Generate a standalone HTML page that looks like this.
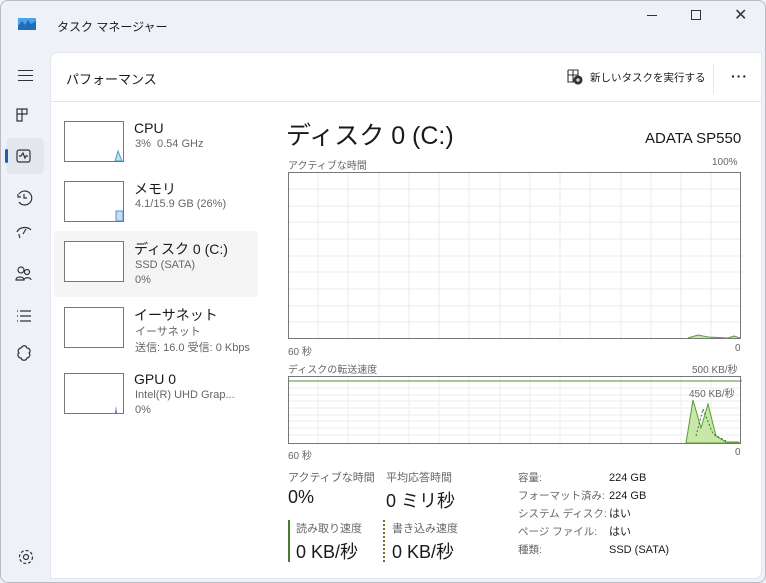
<!DOCTYPE html>
<html><head><meta charset="utf-8"><style>
*{margin:0;padding:0;box-sizing:border-box}
body{width:766px;height:583px;background:#eef2f8;font-family:"Liberation Sans","Noto Sans CJK JP",sans-serif;color:#1a1a1a;position:relative;overflow:hidden}
.a{position:absolute;white-space:nowrap}
.card{position:absolute;left:50px;top:52px;width:712px;height:527px;background:#fff;border-radius:8px 0 8px 0;border:1px solid #e3e6ea}
.s{color:#666;font-size:11px}
.thumb{position:absolute;left:64px;width:60px;height:41px;border:1px solid #777;background:#fff}
</style></head><body>
<div class="a" style="left:0;top:0;width:766px;height:583px;border:1px solid #b8bcc2;border-radius:8px"></div>
<svg class="a" style="left:18px;top:18px" width="18" height="12"><rect width="18" height="12" fill="#4aa3e8"/><path d="M0 8 L4 3 L7 7 L10 2 L13 6 L18 3 L18 12 L0 12Z" fill="#1f6fb8"/></svg>
<div class="a" style="left:57px;top:18px;font-size:12px">タスク マネージャー</div>
<div class="a" style="left:647px;top:15px;width:10px;height:1px;background:#333"></div>
<div class="a" style="left:691px;top:10px;width:10px;height:10px;border:1px solid #333"></div>
<div class="a" style="left:734px;top:5px;font-size:16px;color:#333">✕</div>
<div class="a" style="left:18px;top:70px;width:15px;height:11px;border-top:1px solid #333;border-bottom:1px solid #333"><div style="margin-top:4px;height:1px;background:#333"></div></div>
<div class="a" style="left:6px;top:138px;width:38px;height:36px;background:#e4e8ee;border-radius:5px"></div>
<div class="a" style="left:5px;top:149px;width:3px;height:14px;background:#1a5fb4;border-radius:2px"></div>
<svg class="a" style="left:14px;top:100px" width="22" height="280" fill="none" stroke="#333" stroke-width="1.2">
<path d="M3 9h10v5h-5v7h-5z M8 9v12 M3 14h5"/>
<rect x="3" y="50" width="13" height="12" rx="2"/><path d="M5 56h2l2-3 2 5 1-2h2"/>
<path d="M5 94a7 7 0 1 1 0 8 M4 94v3h3 M10 94v4h3"/>
<path d="M3 132c2-5 10-6 14-2 M9 134l3-5 M5 134c0 2 1 4 1 4"/>
<circle cx="7" cy="170" r="3"/><circle cx="13" cy="172" r="2.5"/><path d="M2 180c0-4 8-4 8 0z M10 180c0-3 7-3 7 0"/>
<path d="M6 211h11 M6 216h11 M6 221h11 M3 211h1 M3 216h1 M3 221h1"/>
<path d="M7 248c2-3 5-3 6 0 3 0 4 4 2 5 2 2 0 5-2 5-1 3-5 3-6 0-3 0-4-4-2-5-2-2 0-5 2-5z"/>
</svg>
<svg class="a" style="left:17px;top:548px" width="18" height="18" fill="none" stroke="#333" stroke-width="1.2"><circle cx="9" cy="9" r="2.5"/><circle cx="9" cy="9" r="6.5" stroke-dasharray="3 2"/></svg>
<div class="card"></div>
<div class="a" style="left:51px;top:101px;width:711px;height:1px;background:#e6e6e6"></div>
<div class="a" style="left:66px;top:69px;font-size:13px">パフォーマンス</div>
<svg class="a" style="left:567px;top:69px" width="16" height="16" fill="none" stroke="#333" stroke-width="1.1"><path d="M1 1h10v6 M1 1v12h6 M1 6h10 M6 1v12"/><circle cx="11" cy="11" r="4" fill="#333"/><path d="M11 9v4M9 11h4" stroke="#fff"/></svg>
<div class="a" style="left:590px;top:70px;font-size:10.5px">新しいタスクを実行する</div>
<div class="a" style="left:713px;top:64px;width:1px;height:30px;background:#e6e6e6"></div>
<div class="a" style="left:731px;top:68px;font-size:14px;letter-spacing:1px;font-weight:bold">···</div>
<div class="a" style="left:54px;top:231px;width:204px;height:66px;background:#f5f5f5;border-radius:4px"></div>
<div class="thumb" style="top:121px"><svg width="58" height="39"><path d="M50 39 L53 29 L57 39Z" fill="#bfe0f0" stroke="#4a9ec8"/></svg></div>
<div class="a" style="left:134px;top:120px;font-size:14px">CPU</div>
<div class="a s" style="left:135px;top:138px">3%&nbsp; 0.54 GHz</div>
<div class="thumb" style="top:181px"><svg width="58" height="39"><rect x="51" y="29" width="7" height="10" fill="#c4dcf4" stroke="#5a8cc8"/></svg></div>
<div class="a" style="left:134px;top:179px;font-size:14px">メモリ</div>
<div class="a s" style="left:135px;top:198px">4.1/15.9 GB (26%)</div>
<div class="thumb" style="top:241px"></div>
<div class="a" style="left:134px;top:239px;font-size:14px">ディスク 0 (C:)</div>
<div class="a s" style="left:135px;top:259px">SSD (SATA)</div>
<div class="a s" style="left:135px;top:274px">0%</div>
<div class="thumb" style="top:307px"></div>
<div class="a" style="left:134px;top:305px;font-size:14px">イーサネット</div>
<div class="a s" style="left:135px;top:323px">イーサネット</div>
<div class="a s" style="left:135px;top:339px">送信: 16.0 受信: 0 Kbps</div>
<div class="thumb" style="top:373px"><svg width="58" height="39"><path d="M50 39 L51 32 L52 39Z" fill="#8a5cc0"/></svg></div>
<div class="a" style="left:134px;top:371px;font-size:14px">GPU 0</div>
<div class="a s" style="left:135px;top:389px">Intel(R) UHD Grap...</div>
<div class="a s" style="left:135px;top:404px">0%</div>
<div class="a" style="left:286px;top:116px;font-size:25px">ディスク 0 (C:)</div>
<div class="a" style="left:645px;top:130px;font-size:15px">ADATA SP550</div>
<div class="a s" style="left:288px;top:157px;font-size:10px">アクティブな時間</div>
<div class="a s" style="left:712px;top:157px;font-size:10px">100%</div>
<svg class="a" style="left:288px;top:172px" width="454" height="168">
<g stroke="#ebebeb" stroke-width="1">
<path d="M30 0V168M60 0V168M91 0V168M121 0V168M151 0V168M181 0V168M212 0V168M242 0V168M272 0V168M302 0V168M333 0V168M363 0V168M393 0V168M423 0V168"/>
<path d="M0 17H454M0 34H454M0 50H454M0 67H454M0 84H454M0 100H454M0 117H454M0 134H454M0 150H454"/>
</g>
<path d="M400 166 L410 163 L420 165 L440 166 L446 164 L452 166" stroke="#5a9a3a" fill="#cbe8b0"/>
<rect x="0.5" y="0.5" width="452" height="166" fill="none" stroke="#777"/>
</svg>
<div class="a s" style="left:288px;top:343px;font-size:10px">60 秒</div>
<div class="a s" style="left:735px;top:343px;font-size:10px">0</div>
<div class="a s" style="left:288px;top:361px;font-size:10px">ディスクの転送速度</div>
<div class="a s" style="left:692px;top:361px;font-size:10px">500 KB/秒</div>
<svg class="a" style="left:288px;top:376px" width="454" height="69">
<g stroke="#ededed"><path d="M30 0V69M60 0V69M91 0V69M121 0V69M151 0V69M181 0V69M212 0V69M242 0V69M272 0V69M302 0V69M333 0V69M363 0V69M393 0V69M423 0V69"/><path d="M0 12H454M0 19H454M0 25H454M0 32H454M0 39H454M0 45H454M0 52H454M0 59H454"/></g>
<path d="M398 67 L405 24 L413 52 L420 28 L428 60 L438 66 L450 66 L452 67Z" fill="#c8e8a8" stroke="#5a9a3a"/>
<path d="M408 60 L415 33 L425 58 L438 65" stroke="#3a6a2a" stroke-dasharray="2 2" fill="none"/>
<path d="M0 5H454" stroke="#5a8a2a"/>
<rect x="0.5" y="0.5" width="452" height="67" fill="none" stroke="#777"/>
</svg>
<div class="a s" style="left:689px;top:385px;font-size:10px">450 KB/秒</div>
<div class="a s" style="left:288px;top:447px;font-size:10px">60 秒</div>
<div class="a s" style="left:735px;top:447px;font-size:10px">0</div>
<div class="a s" style="left:288px;top:469px">アクティブな時間</div>
<div class="a s" style="left:386px;top:469px">平均応答時間</div>
<div class="a" style="left:288px;top:487px;font-size:18px">0%</div>
<div class="a" style="left:386px;top:487px;font-size:18px">0 ミリ秒</div>
<div class="a" style="left:288px;top:520px;width:2px;height:42px;background:#4a7a2a"></div>
<div class="a" style="left:383px;top:520px;width:0;height:42px;border-left:2px dotted #7a6a2a"></div>
<div class="a s" style="left:296px;top:520px">読み取り速度</div>
<div class="a s" style="left:392px;top:520px">書き込み速度</div>
<div class="a" style="left:296px;top:538px;font-size:18px">0 KB/秒</div>
<div class="a" style="left:392px;top:538px;font-size:18px">0 KB/秒</div>
<div class="a s" style="left:518px;top:469px;line-height:18px;font-size:10.5px">容量:<br>フォーマット済み:<br>システム ディスク:<br>ページ ファイル:<br>種類:</div>
<div class="a" style="left:609px;top:469px;line-height:18px;font-size:11px">224 GB<br>224 GB<br>はい<br>はい<br>SSD (SATA)</div>
</body></html>
